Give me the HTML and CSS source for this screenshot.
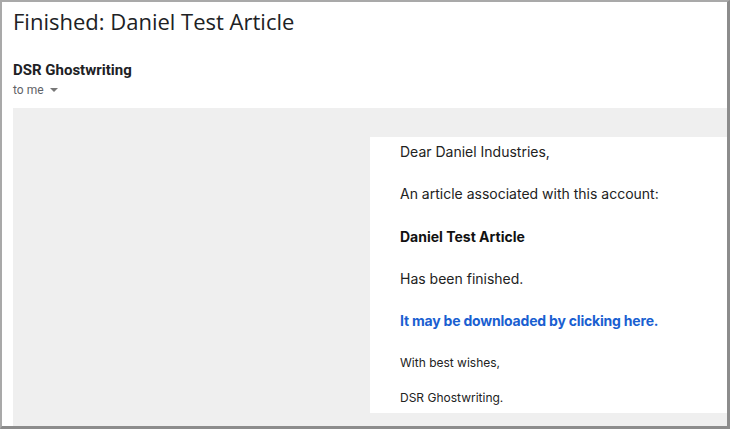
FILE: index.html
```html
<!DOCTYPE html>
<html>
<head>
<meta charset="utf-8">
<link rel="stylesheet" href="styles.css">
</head>
<body>
<div class="window">
  <h1 class="subject">Finished: Daniel Test Article</h1>
  <div class="sender">
    <div class="from">DSR Ghostwriting</div>
    <div class="to">to me <span class="caret"></span></div>
  </div>
  <div class="mail-bg">
    <div class="card">
      <p class="line">Dear Daniel Industries,</p>
      <p class="line">An article associated with this account:</p>
      <p class="line strong">Daniel Test Article</p>
      <p class="line">Has been finished.</p>
      <p class="line link-line"><a class="link" href="#">It may be downloaded by clicking here.</a></p>
      <p class="line small">With best wishes,</p>
      <p class="line small">DSR Ghostwriting.</p>
    </div>
  </div>
</div>
</body>
</html>
```
FILE: styles.css
```css
* { box-sizing: border-box; }
html, body { margin: 0; padding: 0; background: #fff; }
.window {
  width: 730px;
  height: 429px;
  border-left: 2px solid #a9a9a9;
  border-top: 2px solid #a9a9a9;
  border-right: 3px solid #8c8c8c;
  border-bottom: 3px solid #8c8c8c;
  padding-left: 11px;
  display: flex;
  flex-direction: column;
  overflow: hidden;
  background: #fff;
}
.subject {
  margin: 0;
  padding-top: 4px;
  font-family: "Open Sans", sans-serif;
  font-weight: 400;
  font-size: 22px;
  line-height: 30px;
  color: #202124;
}
.sender {
  padding-top: 25px;
  font-family: Roboto, sans-serif;
}
.from {
  font-weight: 700;
  font-size: 15px;
  line-height: 19px;
  color: #202124;
}
.to {
  font-size: 12px;
  line-height: 20px;
  color: #5f6368;
  display: flex;
  align-items: center;
}
.caret {
  display: inline-block;
  margin-left: 6px;
  width: 0; height: 0;
  border-left: 4px solid transparent;
  border-right: 4px solid transparent;
  border-top: 4px solid #777;
}
.mail-bg {
  margin-top: 8px;
  flex: 1;
  min-height: 0;
  overflow: hidden;
  background: #efefef;
  padding: 29px 0 13px 357px;
  display: flex;
}
.card {
  flex: 1;
  background: #fff;
  padding: 5px 0 0 30px;
  font-family: Inter, sans-serif;
  color: #222;
  overflow: hidden;
}
.line {
  margin: 0 0 23.3px;
  font-size: 14px;
  line-height: 19px;
}
.strong { font-weight: 700; color: #111; }
.link-line { margin-bottom: 24.5px; }
.link { color: #1a5fd1; font-weight: 700; text-decoration: none; letter-spacing: -0.2px; }
.small { font-size: 12px; line-height: 16px; margin-bottom: 19px; }
.small:last-child { margin-bottom: 0; }
```
